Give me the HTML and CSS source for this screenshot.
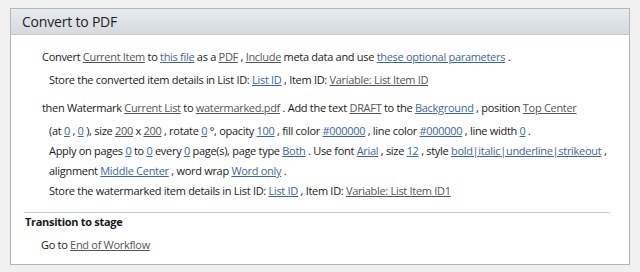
FILE: index.html
```html
<!DOCTYPE html>
<html lang="en">
<head>
    <meta charset="UTF-8">
    <title>Convert to PDF</title>
    <link rel="stylesheet" href="styles.css">
</head>
<body>

    <div class="panel">
        <div class="panel-head">Convert to PDF</div>
        <div class="panel-body">
            <div class="group">
                <div class="row">Convert <a class="fld">Current Item</a> to <a class="lnk">this file</a> as a <a class="fld">PDF</a> , <a class="fld">Include</a> meta data and use <a class="lnk">these optional parameters</a> .</div>
                <div class="row sub">Store the converted item details in List ID: <a class="lnk">List ID</a> , Item ID: <a class="fld">Variable: List Item ID</a></div>
            </div>
            <div class="group">
                <div class="row">then Watermark <a class="fld">Current List</a> to <a class="fld">watermarked.pdf</a> . Add the text <a class="fld">DRAFT</a> to the <a class="lnk">Background</a> , position <a class="fld">Top Center</a></div>
                <div class="row sub">(at <a class="lnk">0</a> , <a class="lnk">0</a> ), size <a class="fld">200</a> x <a class="fld">200</a> , rotate <a class="lnk">0</a> °, opacity <a class="lnk">100</a> , fill color <a class="lnk">#000000</a> , line color <a class="lnk">#000000</a> , line width <a class="lnk">0</a> .</div>
                <div class="row sub">Apply on pages <a class="lnk">0</a> to <a class="lnk">0</a> every <a class="lnk">0</a> page(s), page type <a class="lnk">Both</a> . Use font <a class="lnk">Arial</a> , size <a class="lnk">12</a> , style <a class="lnk">bold|italic|underline|strikeout</a> ,</div>
                <div class="row sub">alignment <a class="lnk">Middle Center</a> , word wrap <a class="lnk">Word only</a> .</div>
                <div class="row sub">Store the watermarked item details in List ID: <a class="lnk">List ID</a> , Item ID: <a class="fld">Variable: List Item ID1</a></div>
            </div>
            <div class="transition">
                <div class="transition-title">Transition to stage</div>
                <div class="row">Go to <a class="fld">End of Workflow</a></div>
            </div>
        </div>
    </div>

</body>
</html>
```

FILE: styles.css
```css
body {
    margin: 0;
    padding: 8px 10px 10px 10px;
    background: #f0f0f0;
    font-family: "Open Sans", Lato, sans-serif;
    font-size: 11px;
    letter-spacing: -0.3px;
    color: #1a1a1a;
}
.panel {
    border: 1px solid #b4b4b4;
    background: #fff;
}
.panel-head {
    height: 25px;
    line-height: 25px;
    padding-left: 11px;
    font-size: 14px;
    letter-spacing: -0.2px;
    color: #1e1e1e;
    background: linear-gradient(#e8ebee, #d5dae0);
    border-bottom: 1px solid #c4c9cf;
}
.panel-body {
    padding: 12px 0 6px 13px;
}
.group {
    margin-bottom: 8px;
}
.row {
    line-height: 20px;
    padding-left: 18px;
    margin-bottom: 3px;
    white-space: nowrap;
}
.row.sub {
    padding-left: 25px;
    margin-bottom: 0;
}
a {
    text-decoration: underline;
    cursor: pointer;
}
a.fld {
    color: #555;
}
a.lnk {
    color: #3d66a0;
}
.transition {
    border-top: 1px solid #c8c8c8;
    margin-right: 19px;
    margin-top: 11px;
}
.transition-title {
    font-weight: bold;
    line-height: 18px;
    padding-left: 1px;
}
.transition .row {
    padding-left: 17px;
    margin-top: 4px;
}
```
